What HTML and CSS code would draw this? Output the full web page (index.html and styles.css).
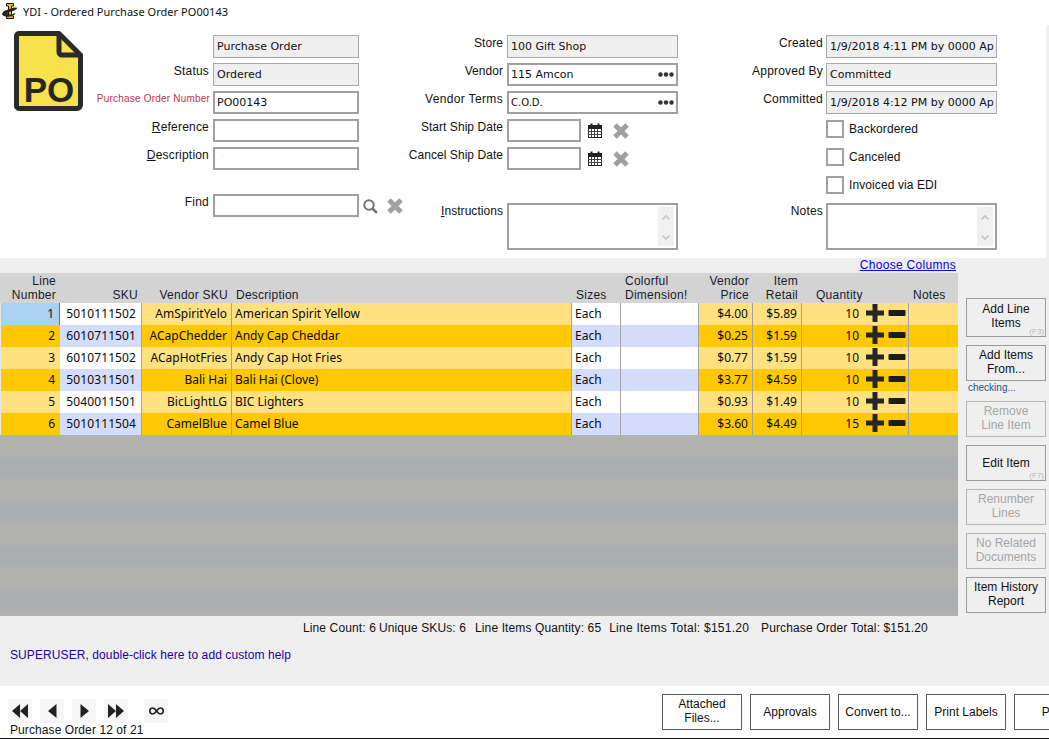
FILE: index.html
```html
<!DOCTYPE html>
<html lang="en">
<head>
<meta charset="utf-8">
<title>YDI - Ordered Purchase Order PO00143</title>
<link rel="stylesheet" href="styles.css">
</head>
<body>
<svg class="defs" width="0" height="0" aria-hidden="true">
  <symbol id="i-x" viewBox="0 0 16 16"><path d="M2 2l12 12M14 2L2 14" stroke="#a0a0a0" stroke-width="5" fill="none"/></symbol>
  <symbol id="i-cal" viewBox="0 0 14 15">
    <rect x="0.5" y="3.5" width="13" height="11" fill="#fff" stroke="#222"/>
    <rect x="0" y="2" width="14" height="4" fill="#222"/>
    <path d="M3.5 0.5v3M10.5 0.5v3" stroke="#222" stroke-width="2"/>
    <path d="M0 8.500h14M0 11.500h14M3.500 6v8M6.500 6v8M9.500 6v8" stroke="#444" fill="none"/>
  </symbol>
  <symbol id="i-dots" viewBox="0 0 16 5"><circle cx="2.5" cy="2.5" r="2.2" fill="#333"/><circle cx="8" cy="2.5" r="2.2" fill="#333"/><circle cx="13.5" cy="2.5" r="2.2" fill="#333"/></symbol>
  <symbol id="i-plus" viewBox="0 0 18 18"><path d="M6.500 0h5v6.500H18v5h-6.500V18h-5v-6.500H0v-5h6.500z" fill="#262626"/></symbol>
  <symbol id="i-minus" viewBox="0 0 18 18"><rect x="0.5" y="6" width="17" height="6" rx="1" fill="#1c1c1c"/></symbol>
</svg>

<header class="titlebar">
  <svg class="app-icon" viewBox="0 0 16 16" width="16" height="16">
    <path d="M4.500 0.500h7v2.500h-2v10h2v2.500h-7V13h2V3h-2z" fill="#f5c400" stroke="#111" stroke-width="1"/>
    <path d="M0.500 10c2-3.500 7-3.500 11-5.500l4 .3c-1 2.200-4.500 3.200-6.500 3.700-3 .8-4.500 1.500-2.500 2.700 2.500.6 4.500 0 5.500-1l1.500.6c-2 2.800-8 3.400-11 2.400-2-.6-3-1.800-2-3.200z" fill="#222"/>
  </svg>
  <span class="title-text">YDI - Ordered Purchase Order PO00143</span>
</header>

<main class="main">
  <section class="form">
    <svg class="logo" viewBox="0 0 69 80" width="69" height="80">
      <path d="M5 2.500H45L66.500 24V74a3.500 3.500 0 0 1-3.500 3.500H5A3 3 0 0 1 2.500 74V5A3 3 0 0 1 5 2.500z" fill="#f7e24c" stroke="#2a2a2a" stroke-width="5" stroke-linejoin="round"/>
      <path d="M45 3V21a3 3 0 0 0 3 3H66" fill="none" stroke="#2a2a2a" stroke-width="5"/>
      <text x="35" y="71" class="logo-text" text-anchor="middle">PO</text>
    </svg>

    <div class="col col1">
      <div class="row"><span class="label"></span><div class="field ro">Purchase Order</div></div>
      <div class="row"><span class="label">Status</span><div class="field ro">Ordered</div></div>
      <div class="row"><span class="label req">Purchase Order Number</span><div class="field">PO00143</div></div>
      <div class="row"><span class="label"><u>R</u>eference</span><div class="field"></div></div>
      <div class="row"><span class="label"><u>D</u>escription</span><div class="field"></div></div>
      <div class="row find"><span class="label">Find</span><div class="field"></div>
        <svg class="ic-search" viewBox="0 0 15 15" width="15" height="15"><circle cx="6" cy="6" r="4.7" fill="none" stroke="#737373" stroke-width="2"/><path d="M9.500 9.500l4.300 4.300" stroke="#737373" stroke-width="2.600"/></svg>
        <svg class="ic-x" width="16" height="16"><use href="#i-x"/></svg>
      </div>
    </div>

    <div class="col col2">
      <div class="row"><span class="label">Store</span><div class="field ro">100 Gift Shop</div></div>
      <div class="row"><span class="label">Vendor</span><div class="field pick">115 Amcon<svg class="dots" width="16" height="5"><use href="#i-dots"/></svg></div></div>
      <div class="row"><span class="label wide">Vendor Terms</span><div class="field pick small">C.O.D.<svg class="dots" width="16" height="5"><use href="#i-dots"/></svg></div></div>
      <div class="row"><span class="label">Start Ship Date</span><div class="field date"></div>
        <svg class="ic-cal" width="14" height="15"><use href="#i-cal"/></svg>
        <svg class="ic-x" width="16" height="16"><use href="#i-x"/></svg></div>
      <div class="row"><span class="label">Cancel Ship Date</span><div class="field date"></div>
        <svg class="ic-cal" width="14" height="15"><use href="#i-cal"/></svg>
        <svg class="ic-x" width="16" height="16"><use href="#i-x"/></svg></div>
      <div class="row tall spaced"><span class="label"><u>I</u>nstructions</span>
        <div class="field area"><div class="scroll">
          <svg width="10" height="7" viewBox="0 0 10 7"><path d="M1.500 5.500L5 2l3.500 3.500" fill="none" stroke="#c4c4c4" stroke-width="1.600"/></svg>
          <svg width="10" height="7" viewBox="0 0 10 7"><path d="M1.500 1.500L5 5l3.500-3.500" fill="none" stroke="#c4c4c4" stroke-width="1.600"/></svg>
        </div></div></div>
    </div>

    <div class="col col3">
      <div class="row"><span class="label">Created</span><div class="field ro">1/9/2018 4:11 PM by 0000 Ap</div></div>
      <div class="row"><span class="label">Approved By</span><div class="field ro">Committed</div></div>
      <div class="row"><span class="label">Committed</span><div class="field ro">1/9/2018 4:12 PM by 0000 Ap</div></div>
      <div class="row check"><span class="box"></span><span class="check-label">Backordered</span></div>
      <div class="row check"><span class="box"></span><span class="check-label">Canceled</span></div>
      <div class="row check"><span class="box"></span><span class="check-label">Invoiced via EDI</span></div>
      <div class="row tall"><span class="label">Notes</span>
        <div class="field area"><div class="scroll">
          <svg width="10" height="7" viewBox="0 0 10 7"><path d="M1.500 5.500L5 2l3.500 3.500" fill="none" stroke="#c4c4c4" stroke-width="1.600"/></svg>
          <svg width="10" height="7" viewBox="0 0 10 7"><path d="M1.500 1.500L5 5l3.500-3.500" fill="none" stroke="#c4c4c4" stroke-width="1.600"/></svg>
        </div></div></div>
    </div>
  </section>

  <section class="work">
    <div class="grid-wrap">
      <div class="choose"><a href="#">Choose Columns</a></div>
      <table class="grid">
        <colgroup>
          <col class="w-line"><col class="w-sku"><col class="w-vsku"><col class="w-desc"><col class="w-size"><col class="w-dim"><col class="w-price"><col class="w-retail"><col class="w-qty"><col class="w-notes">
        </colgroup>
        <thead>
          <tr>
            <th class="r">Line<br>Number</th><th class="r">SKU</th><th class="r">Vendor SKU</th><th>Description</th><th>Sizes</th><th>Colorful<br>Dimension!</th><th class="r">Vendor<br>Price</th><th class="r">Item<br>Retail</th><th class="qh">Quantity</th><th>Notes</th>
          </tr>
        </thead>
        <tbody>
          <tr><td class="num sel">1</td><td class="num alt sku">5010111502</td><td class="num">AmSpiritYelo</td><td>American Spirit Yellow</td><td class="alt">Each</td><td class="alt"></td><td class="num">$4.00</td><td class="num">$5.89</td><td class="qty"><span class="q">10</span><svg width="18" height="18"><use href="#i-plus"/></svg><svg width="18" height="18"><use href="#i-minus"/></svg></td><td></td></tr>
          <tr><td class="num">2</td><td class="num alt sku">6010711501</td><td class="num">ACapChedder</td><td>Andy Cap Cheddar</td><td class="alt">Each</td><td class="alt"></td><td class="num">$0.25</td><td class="num">$1.59</td><td class="qty"><span class="q">10</span><svg width="18" height="18"><use href="#i-plus"/></svg><svg width="18" height="18"><use href="#i-minus"/></svg></td><td></td></tr>
          <tr><td class="num">3</td><td class="num alt sku">6010711502</td><td class="num">ACapHotFries</td><td>Andy Cap Hot Fries</td><td class="alt">Each</td><td class="alt"></td><td class="num">$0.77</td><td class="num">$1.59</td><td class="qty"><span class="q">10</span><svg width="18" height="18"><use href="#i-plus"/></svg><svg width="18" height="18"><use href="#i-minus"/></svg></td><td></td></tr>
          <tr><td class="num">4</td><td class="num alt sku">5010311501</td><td class="num">Bali Hai</td><td>Bali Hai (Clove)</td><td class="alt">Each</td><td class="alt"></td><td class="num">$3.77</td><td class="num">$4.59</td><td class="qty"><span class="q">10</span><svg width="18" height="18"><use href="#i-plus"/></svg><svg width="18" height="18"><use href="#i-minus"/></svg></td><td></td></tr>
          <tr><td class="num">5</td><td class="num alt sku">5040011501</td><td class="num">BicLightLG</td><td>BIC Lighters</td><td class="alt">Each</td><td class="alt"></td><td class="num">$0.93</td><td class="num">$1.49</td><td class="qty"><span class="q">10</span><svg width="18" height="18"><use href="#i-plus"/></svg><svg width="18" height="18"><use href="#i-minus"/></svg></td><td></td></tr>
          <tr><td class="num">6</td><td class="num alt sku">5010111504</td><td class="num">CamelBlue</td><td>Camel Blue</td><td class="alt">Each</td><td class="alt"></td><td class="num">$3.60</td><td class="num">$4.49</td><td class="qty"><span class="q">15</span><svg width="18" height="18"><use href="#i-plus"/></svg><svg width="18" height="18"><use href="#i-minus"/></svg></td><td></td></tr>
        </tbody>
      </table>
      <div class="filler"></div>
    </div>

    <aside class="side">
      <button class="btn first">Add Line<br>Items<span class="hint">(F3)</span></button>
      <button class="btn two">Add Items<br>From...</button>
      <div class="checking">checking...</div>
      <button class="btn two off">Remove<br>Line Item</button>
      <button class="btn gap">Edit Item<span class="hint">(F7)</span></button>
      <button class="btn two off gap">Renumber<br>Lines</button>
      <button class="btn two off gap">No Related<br>Documents</button>
      <button class="btn two gap">Item History<br>Report</button>
    </aside>
  </section>

  <section class="info">
    <div class="stats">
      <span class="s1">Line Count: 6</span><span class="s2">Unique SKUs: 6</span><span class="s3">Line Items Quantity: 65</span><span class="s4">Line Items Total: $151.20</span><span class="s5">Purchase Order Total: $151.20</span>
    </div>
    <div class="help">SUPERUSER, double-click here to add custom help</div>
  </section>
</main>

<footer class="bottom">
  <div class="nav-group">
    <div class="nav">
      <span class="nav-btn"><svg width="16" height="14" viewBox="0 0 16 14"><path d="M8 0v14L0 7zM16 0v14L8 7z" fill="#222"/></svg></span>
      <span class="nav-btn"><svg width="9" height="14" viewBox="0 0 9 14"><path d="M8.500 0v14L0 7z" fill="#222"/></svg></span>
      <span class="nav-btn"><svg width="9" height="14" viewBox="0 0 9 14"><path d="M0.500 0v14L9 7z" fill="#222"/></svg></span>
      <span class="nav-btn"><svg width="16" height="14" viewBox="0 0 16 14"><path d="M0 0v14l8-7zM8 0v14l8-7z" fill="#222"/></svg></span>
      <span class="nav-btn inf"><svg width="15" height="8" viewBox="0 0 15 8"><path d="M7.500 4C6 1.800 5 1 3.700 1a3 3 0 0 0 0 6C5 7 6 6.200 7.500 4S10 1 11.300 1a3 3 0 0 1 0 6C10 7 9 6.200 7.500 4z" fill="none" stroke="#222" stroke-width="1.700"/></svg></span>
    </div>
    <div class="record">Purchase Order 12 of 21</div>
  </div>
  <div class="actions">
    <button class="act two">Attached<br>Files...</button>
    <button class="act">Approvals</button>
    <button class="act">Convert to...</button>
    <button class="act">Print Labels</button>
    <button class="act">Print</button>
  </div>
</footer>
</body>
</html>
```

FILE: styles.css
```css
* { box-sizing: border-box; }
html, body { margin: 0; padding: 0; }
body {
  width: 1049px;
  height: 739px;
  overflow: hidden;
  background: #fff;
  font: 12px/16px "Liberation Sans", Arial, sans-serif;
  color: #111;
  display: flex;
  flex-direction: column;
}
.defs { position: absolute; }

.titlebar { height: 25px; flex: none; display: flex; align-items: flex-start; padding: 3px 0 0 2px; background: #fff; }
.app-icon { flex: none; }
.title-text { margin: 1px 0 0 5px; font: 11px/16px "Noto Sans", sans-serif; letter-spacing: .04px; color: #111; }

.main { flex: none; height: 661px; background: #efefef; display: flex; flex-direction: column; }

/* form */
.form { height: 233px; flex: none; margin-right: 3px; background: #fff; display: flex; padding: 6px 0 0 14px; }
.logo { flex: none; width: 69px; height: 80px; }
.logo-text { font: bold 35px "Liberation Sans", sans-serif; fill: #262626; }
.col { display: flex; flex-direction: column; gap: 5px; padding-top: 4px; flex: none; }
.col1 { width: 322px; }
.col2 { width: 273px; }
.col3 { margin-left: 67px; }
.row { display: flex; height: 23px; flex: none; }
.row.find { margin-top: 19px; }
.row.tall { height: 47px; }
.row.spaced { margin-top: 28px; }
.label { flex: none; text-align: right; line-height: 16px; white-space: nowrap; letter-spacing: .2px; }
.col2 .label { letter-spacing: .05px; }
.col2 .label.wide { letter-spacing: .35px; }
.col1 .label { width: 126px; margin-right: 4px; }
.col2 .label { width: 98px; margin-right: 4px; }
.col3 .label { width: 78px; margin-right: 3px; }
.col1 .label.req { font-size: 10px; color: #c4344e; margin-right: 3px; width: 127px; line-height: 15px; letter-spacing: .2px; }

.field {
  flex: none;
  height: 23px;
  border: 2px solid #a0a0a0;
  background: #fff;
  padding: 0 2px;
  font: 11px/19px "DejaVu Sans", Verdana, sans-serif;
  color: #111;
  white-space: nowrap;
  overflow: hidden;
}
.col1 .field { width: 146px; }
.col2 .field, .col3 .field { width: 171px; }
.field.ro { border-width: 1px; border-color: #a8a8a8; background: #efefef; padding: 0 3px; line-height: 21px; }
.field.pick { display: flex; justify-content: space-between; align-items: center; padding-right: 2px; }
.field.small { font-size: 10px; }
.col2 .field.date { width: 74px; }
.dots { flex: none; }
.field.area { height: 47px; width: 171px; padding: 2px 1px 2px 0; display: flex; justify-content: flex-end; }
.scroll { width: 16px; background: #f0f0f0; display: flex; flex-direction: column; justify-content: space-between; align-items: center; padding: 7px 0 5px; margin-right: 1px; }

.ic-search { margin: 5px 0 0 4px; flex: none; }
.ic-x { flex: none; margin: 4px 0 0 11px; }
.ic-search + .ic-x { margin-left: 9px; }
.ic-cal { flex: none; margin: 4px 0 0 7px; }

.check { padding-top: 1px; padding-left: 81px; }
.box { width: 18px; height: 18px; flex: none; border: 2px solid #a0a0a0; background: #fff; }
.check-label { margin-left: 5px; line-height: 18px; letter-spacing: .1px; }

/* work area */
.work { flex: none; height: 358px; display: flex; }
.grid-wrap { width: 958px; flex: none; display: flex; flex-direction: column; }
.choose { height: 15px; flex: none; text-align: right; padding-right: 2px; line-height: 15px; letter-spacing: .3px; }
.choose a { color: #0000ee; }
.grid { width: 958px; table-layout: fixed; border-collapse: separate; border-spacing: 0; flex: none; }
.w-line { width: 60px; } .w-sku { width: 82px; } .w-vsku { width: 90px; } .w-desc { width: 340px; } .w-size { width: 49px; }
.w-dim { width: 78px; } .w-price { width: 54px; } .w-retail { width: 49px; } .w-qty { width: 107px; } .w-notes { width: 49px; }

.grid th {
  height: 30px;
  padding: 0 3px 1px 4px;
  background: #d3d3d3;
  font: 12px/14px "Liberation Sans", sans-serif;
  color: #1a1a2a;
  text-align: left;
  vertical-align: bottom;
  letter-spacing: .25px;
}
.grid th.r { text-align: right; padding-right: 4px; }
.grid th.qh { padding-left: 14px; }
.grid td {
  height: 22px;
  padding: 0 4px 0 3px;
  font: 12px/22px "Noto Sans", sans-serif;
  color: #0a0a0a;
  white-space: nowrap;
  overflow: hidden;
  border-right: 1px solid #a3a3a3;
  background: #ffe27f;
}
.grid tbody tr:nth-child(even) td { background: #ffc800; }
.grid td.num { text-align: right; }
.grid td.alt { background: #fff; }
.grid tbody tr:nth-child(even) td.alt { background: #d3dcfb; }
.grid td:first-child { border-left: 1px solid #e6e6e6; border-right: 0; }
.grid td.sel { background: #a9d1f0; border-right: 1px solid #2f7fc0; }
.grid td.num:first-child { padding-right: 5px; }
.grid td.sku { padding-right: 5px; letter-spacing: .1px; }
.grid td:last-child { border-right: 0; }
.grid tbody tr td.qty { padding: 0; }
.qty svg { vertical-align: top; margin-top: 1px; }
.qty .q { display: inline-block; width: 57px; text-align: right; vertical-align: top; margin-right: 7px; }
.qty svg + svg { margin-left: 4px; }

.filler { flex: none; height: 181px; background: repeating-linear-gradient(180deg, #b1b1b0 0, #b1b1b0 22px, #acadb0 22px, #acadb0 44px); }

/* side buttons */
.side { flex: none; width: 88px; padding: 40px 0 0 8px; display: flex; flex-direction: column; }
.btn {
  position: relative;
  width: 80px;
  height: 36px;
  flex: none;
  padding: 0;
  border: 1px solid #9a9a9a;
  border-radius: 0;
  background: #efefef;
  font: 12px/14px "Liberation Sans", sans-serif;
  color: #111;
  text-align: center;
}
.btn.two { padding-bottom: 2px; }
.btn.first { height: 39px; margin-bottom: 8px; padding-bottom: 3px; }
.btn.gap { margin-top: 8px; }
.btn.off { color: #a6a6a6; border-color: #b5b5b5; }
.hint { position: absolute; right: 1px; bottom: 0; font-size: 8px; line-height: 9px; color: #b8b8b8; }
.checking { height: 20px; flex: none; padding-left: 2px; font-size: 10px; line-height: 14px; color: #1c4f86; }

/* info */
.info { flex: none; height: 70px; }
.stats { height: 22px; display: flex; padding: 1px 0 0 303px; line-height: 22px; white-space: nowrap; letter-spacing: .12px; }
.s2 { margin-left: 3px; }
.s3 { margin-left: 9px; }
.s4 { margin-left: 8px; letter-spacing: .24px; }
.s5 { margin-left: 12px; }
.help { margin-top: 9px; padding-left: 10px; line-height: 16px; color: #2400a8; letter-spacing: .09px; }

/* bottom */
.bottom { flex: none; height: 53px; display: flex; background: #fff; border-bottom: 1px solid #111; }
.nav-group { width: 662px; flex: none; padding: 13px 0 0 8px; }
.nav { display: flex; gap: 8px; height: 24px; }
.nav-btn { width: 24px; height: 24px; background: #f6f6f6; display: flex; align-items: center; justify-content: center; flex: none; }
.nav-btn.inf { margin-left: 8px; }
.record { padding-left: 2px; line-height: 15px; white-space: nowrap; letter-spacing: .09px; }
.actions { display: flex; gap: 8px; padding-top: 8px; flex: none; }
.act {
  width: 80px;
  height: 36px;
  flex: none;
  padding: 0;
  border: 1px solid #5a5a5a;
  border-radius: 0;
  background: #fff;
  font: 12px/14px "Liberation Sans", sans-serif;
  color: #111;
  text-align: center;
}
.act.two { padding-bottom: 3px; }
```
